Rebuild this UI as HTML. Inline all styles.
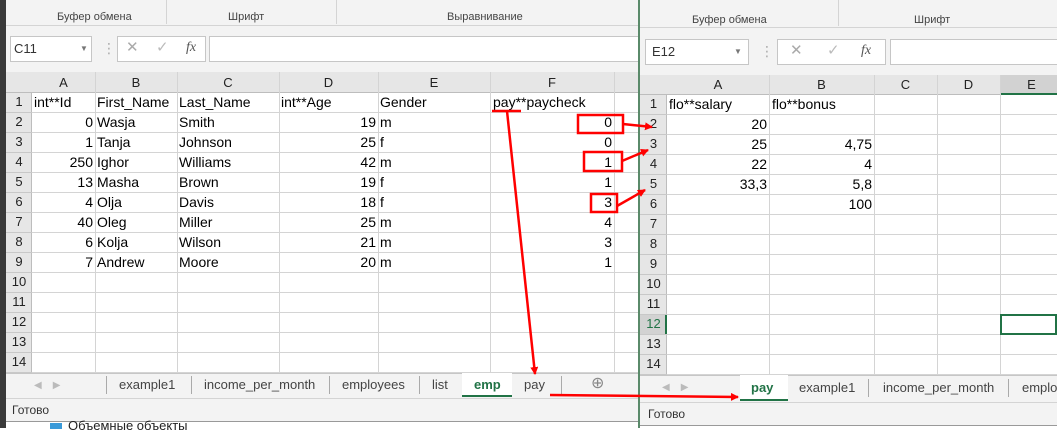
<!DOCTYPE html>
<html><head><meta charset="utf-8"><style>
*{margin:0;padding:0;box-sizing:border-box}
body{width:1057px;height:428px;overflow:hidden;background:#fff;font-family:"Liberation Sans","DejaVu Sans",sans-serif;position:relative}
.a{position:absolute}
.t{position:absolute;font-size:14px;color:#000;white-space:nowrap;line-height:20px}
.r{text-align:right}
.hd{position:absolute;font-size:13px;color:#222;text-align:center;line-height:20px}
.small{font-size:11px;color:#444}
.tab{position:absolute;font-size:13px;color:#444;line-height:24px;white-space:nowrap}
.sep{position:absolute;width:1px;background:#aaa}
</style></head><body>
<div class="a" style="left:0;top:0;width:6px;height:428px;background:#3a3a3a"></div>
<div class="a" style="left:6px;top:0;width:634px;height:422px;background:#f3f3f3"></div>
<div class="a" style="left:6px;top:25px;width:634px;height:1px;background:#d4d4d4"></div>
<div class="t small" style="left:57px;top:7px">Буфер обмена</div>
<div class="t small" style="left:228px;top:7px">Шрифт</div>
<div class="t small" style="left:447px;top:7px">Выравнивание</div>
<div class="a" style="left:166px;top:0;width:1px;height:24px;background:#d4d4d4"></div>
<div class="a" style="left:336px;top:0;width:1px;height:24px;background:#d4d4d4"></div>
<div class="a" style="left:10px;top:36px;width:82px;height:26px;background:#fff;border:1px solid #c6c6c6"></div>
<div class="t" style="left:14px;top:39px;color:#333;font-size:13px">C11</div>
<div class="t" style="left:80px;top:39px;font-size:8px;color:#777">▼</div>
<div class="t" style="left:102px;top:38px;color:#aaa">⋮</div>
<div class="a" style="left:117px;top:36px;width:89px;height:26px;background:#fff;border:1px solid #c6c6c6"></div>
<div class="t" style="left:126px;top:38px;color:#aaa;font-size:15px">✕</div>
<div class="t" style="left:156px;top:38px;color:#bbb;font-size:15px">✓</div>
<div class="t" style="left:186px;top:38px;color:#555;font-style:italic;font-family:'Liberation Serif',serif">fx</div>
<div class="a" style="left:209px;top:36px;width:431px;height:26px;background:#fff;border:1px solid #c6c6c6;border-right:none"></div>
<div class="a" style="left:6px;top:72px;width:634px;height:21px;background:#e6e6e6;border-bottom:1px solid #bdbdbd"></div>
<div class="a" style="left:6px;top:93px;width:26px;height:280px;background:#e6e6e6;border-right:1px solid #bdbdbd"></div>
<div class="a" style="left:32px;top:93px;width:608px;height:280px;background:#fff repeating-linear-gradient(to bottom,transparent 0,transparent 19px,#d4d4d4 19px,#d4d4d4 20px)"></div>
<div class="a" style="left:6px;top:93px;width:26px;height:280px;background:repeating-linear-gradient(to bottom,transparent 0,transparent 19px,#c8c8c8 19px,#c8c8c8 20px)"></div>
<div class="a" style="left:95px;top:72px;width:1px;height:301px;background:#d4d4d4"></div>
<div class="a" style="left:177px;top:72px;width:1px;height:301px;background:#d4d4d4"></div>
<div class="a" style="left:279px;top:72px;width:1px;height:301px;background:#d4d4d4"></div>
<div class="a" style="left:378px;top:72px;width:1px;height:301px;background:#d4d4d4"></div>
<div class="a" style="left:490px;top:72px;width:1px;height:301px;background:#d4d4d4"></div>
<div class="a" style="left:614px;top:72px;width:1px;height:301px;background:#d4d4d4"></div>
<div class="hd" style="left:32px;top:73px;width:63px">A</div>
<div class="hd" style="left:95px;top:73px;width:82px">B</div>
<div class="hd" style="left:177px;top:73px;width:102px">C</div>
<div class="hd" style="left:279px;top:73px;width:99px">D</div>
<div class="hd" style="left:378px;top:73px;width:112px">E</div>
<div class="hd" style="left:490px;top:73px;width:124px">F</div>
<div class="hd" style="left:6px;top:92px;width:26px">1</div>
<div class="hd" style="left:6px;top:112px;width:26px">2</div>
<div class="hd" style="left:6px;top:132px;width:26px">3</div>
<div class="hd" style="left:6px;top:152px;width:26px">4</div>
<div class="hd" style="left:6px;top:172px;width:26px">5</div>
<div class="hd" style="left:6px;top:192px;width:26px">6</div>
<div class="hd" style="left:6px;top:212px;width:26px">7</div>
<div class="hd" style="left:6px;top:232px;width:26px">8</div>
<div class="hd" style="left:6px;top:252px;width:26px">9</div>
<div class="hd" style="left:6px;top:272px;width:26px">10</div>
<div class="hd" style="left:6px;top:292px;width:26px">11</div>
<div class="hd" style="left:6px;top:312px;width:26px">12</div>
<div class="hd" style="left:6px;top:332px;width:26px">13</div>
<div class="hd" style="left:6px;top:352px;width:26px">14</div>
<div class="t" style="left:34px;top:92px">int**Id</div>
<div class="t" style="left:97px;top:92px">First_Name</div>
<div class="t" style="left:179px;top:92px">Last_Name</div>
<div class="t" style="left:281px;top:92px">int**Age</div>
<div class="t" style="left:380px;top:92px">Gender</div>
<div class="t" style="left:493px;top:92px">pay**paycheck</div>
<div class="t r" style="left:32px;width:61px;top:112px">0</div><div class="t" style="left:97px;top:112px">Wasja</div><div class="t" style="left:179px;top:112px">Smith</div><div class="t r" style="left:279px;width:97px;top:112px">19</div><div class="t" style="left:380px;top:112px">m</div><div class="t r" style="left:490px;width:122px;top:112px">0</div>
<div class="t r" style="left:32px;width:61px;top:132px">1</div><div class="t" style="left:97px;top:132px">Tanja</div><div class="t" style="left:179px;top:132px">Johnson</div><div class="t r" style="left:279px;width:97px;top:132px">25</div><div class="t" style="left:380px;top:132px">f</div><div class="t r" style="left:490px;width:122px;top:132px">0</div>
<div class="t r" style="left:32px;width:61px;top:152px">250</div><div class="t" style="left:97px;top:152px">Ighor</div><div class="t" style="left:179px;top:152px">Williams</div><div class="t r" style="left:279px;width:97px;top:152px">42</div><div class="t" style="left:380px;top:152px">m</div><div class="t r" style="left:490px;width:122px;top:152px">1</div>
<div class="t r" style="left:32px;width:61px;top:172px">13</div><div class="t" style="left:97px;top:172px">Masha</div><div class="t" style="left:179px;top:172px">Brown</div><div class="t r" style="left:279px;width:97px;top:172px">19</div><div class="t" style="left:380px;top:172px">f</div><div class="t r" style="left:490px;width:122px;top:172px">1</div>
<div class="t r" style="left:32px;width:61px;top:192px">4</div><div class="t" style="left:97px;top:192px">Olja</div><div class="t" style="left:179px;top:192px">Davis</div><div class="t r" style="left:279px;width:97px;top:192px">18</div><div class="t" style="left:380px;top:192px">f</div><div class="t r" style="left:490px;width:122px;top:192px">3</div>
<div class="t r" style="left:32px;width:61px;top:212px">40</div><div class="t" style="left:97px;top:212px">Oleg</div><div class="t" style="left:179px;top:212px">Miller</div><div class="t r" style="left:279px;width:97px;top:212px">25</div><div class="t" style="left:380px;top:212px">m</div><div class="t r" style="left:490px;width:122px;top:212px">4</div>
<div class="t r" style="left:32px;width:61px;top:232px">6</div><div class="t" style="left:97px;top:232px">Kolja</div><div class="t" style="left:179px;top:232px">Wilson</div><div class="t r" style="left:279px;width:97px;top:232px">21</div><div class="t" style="left:380px;top:232px">m</div><div class="t r" style="left:490px;width:122px;top:232px">3</div>
<div class="t r" style="left:32px;width:61px;top:252px">7</div><div class="t" style="left:97px;top:252px">Andrew</div><div class="t" style="left:179px;top:252px">Moore</div><div class="t r" style="left:279px;width:97px;top:252px">20</div><div class="t" style="left:380px;top:252px">m</div><div class="t r" style="left:490px;width:122px;top:252px">1</div>
<div class="a" style="left:6px;top:373px;width:634px;height:1px;background:#c6c6c6"></div>
<div class="t" style="left:34px;top:374px;color:#bbb;font-size:10px;line-height:24px">◀ &nbsp;&nbsp;&nbsp;▶</div>
<div class="sep" style="left:106px;top:376px;height:18px"></div>
<div class="tab" style="left:119px;top:373px">example1</div>
<div class="sep" style="left:191px;top:376px;height:18px"></div>
<div class="tab" style="left:204px;top:373px">income_per_month</div>
<div class="sep" style="left:329px;top:376px;height:18px"></div>
<div class="tab" style="left:342px;top:373px">employees</div>
<div class="sep" style="left:419px;top:376px;height:18px"></div>
<div class="tab" style="left:432px;top:373px">list</div>
<div class="a" style="left:462px;top:373px;width:50px;height:24px;background:#fff;border-bottom:2px solid #217346"></div>
<div class="tab" style="left:474px;top:373px;color:#217346;font-weight:bold">emp</div>
<div class="tab" style="left:524px;top:373px">pay</div>
<div class="sep" style="left:561px;top:376px;height:18px"></div>
<div class="tab" style="left:591px;top:372px;color:#888;font-size:16px">⊕</div>
<div class="a" style="left:6px;top:398px;width:634px;height:1px;background:#d4d4d4"></div>
<div class="t" style="left:12px;top:400px;font-size:12px;color:#333">Готово</div>
<div class="a" style="left:6px;top:421px;width:634px;height:7px;background:#fff;border-top:1px solid #999"></div>
<div class="a" style="left:50px;top:423px;width:12px;height:6px;background:#3a9ad9"></div>
<div class="t" style="left:68px;top:416px;font-size:13px;color:#222">Объемные объекты</div>

<div class="a" style="left:638px;top:0;width:419px;height:428px;background:#f3f3f3;border-left:2px solid #5a8a6a"></div>
<div class="a" style="left:640px;top:27px;width:417px;height:1px;background:#d4d4d4"></div>
<div class="t small" style="left:692px;top:10px">Буфер обмена</div>
<div class="t small" style="left:914px;top:10px">Шрифт</div>
<div class="a" style="left:838px;top:0;width:1px;height:26px;background:#d4d4d4"></div>
<div class="a" style="left:645px;top:39px;width:104px;height:26px;background:#fff;border:1px solid #c6c6c6"></div>
<div class="t" style="left:652px;top:42px;color:#333;font-size:13px">E12</div>
<div class="t" style="left:734px;top:42px;font-size:8px;color:#777">▼</div>
<div class="t" style="left:760px;top:41px;color:#aaa">⋮</div>
<div class="a" style="left:777px;top:39px;width:109px;height:26px;background:#fff;border:1px solid #c6c6c6"></div>
<div class="t" style="left:790px;top:41px;color:#aaa;font-size:15px">✕</div>
<div class="t" style="left:827px;top:41px;color:#bbb;font-size:15px">✓</div>
<div class="t" style="left:861px;top:41px;color:#555;font-style:italic;font-family:'Liberation Serif',serif">fx</div>
<div class="a" style="left:890px;top:39px;width:167px;height:26px;background:#fff;border:1px solid #c6c6c6;border-right:none"></div>
<div class="a" style="left:640px;top:75px;width:417px;height:20px;background:#e6e6e6;border-bottom:1px solid #bdbdbd"></div>
<div class="a" style="left:1000px;top:75px;width:57px;height:20px;background:#d2d2d2;border-bottom:2px solid #217346"></div>
<div class="a" style="left:640px;top:95px;width:27px;height:280px;background:#e6e6e6;border-right:1px solid #bdbdbd"></div>
<div class="a" style="left:667px;top:95px;width:390px;height:280px;background:#fff repeating-linear-gradient(to bottom,transparent 0,transparent 19px,#d4d4d4 19px,#d4d4d4 20px)"></div>
<div class="a" style="left:640px;top:95px;width:27px;height:280px;background:repeating-linear-gradient(to bottom,transparent 0,transparent 19px,#c8c8c8 19px,#c8c8c8 20px)"></div>
<div class="a" style="left:640px;top:315px;width:27px;height:19px;background:#d2d2d2;border-right:2px solid #217346"></div>
<div class="a" style="left:769px;top:75px;width:1px;height:300px;background:#d4d4d4"></div>
<div class="a" style="left:874px;top:75px;width:1px;height:300px;background:#d4d4d4"></div>
<div class="a" style="left:937px;top:75px;width:1px;height:300px;background:#d4d4d4"></div>
<div class="a" style="left:1000px;top:75px;width:1px;height:300px;background:#d4d4d4"></div>
<div class="a" style="left:1000px;top:314px;width:57px;height:21px;border:2px solid #217346"></div>
<div class="hd" style="left:667px;top:75px;width:102px">A</div>
<div class="hd" style="left:769px;top:75px;width:105px">B</div>
<div class="hd" style="left:874px;top:75px;width:63px">C</div>
<div class="hd" style="left:937px;top:75px;width:63px">D</div>
<div class="hd" style="left:1000px;top:75px;width:63px">E</div>
<div class="hd" style="left:640px;top:94px;width:27px">1</div>
<div class="hd" style="left:640px;top:114px;width:27px">2</div>
<div class="hd" style="left:640px;top:134px;width:27px">3</div>
<div class="hd" style="left:640px;top:154px;width:27px">4</div>
<div class="hd" style="left:640px;top:174px;width:27px">5</div>
<div class="hd" style="left:640px;top:194px;width:27px">6</div>
<div class="hd" style="left:640px;top:214px;width:27px">7</div>
<div class="hd" style="left:640px;top:234px;width:27px">8</div>
<div class="hd" style="left:640px;top:254px;width:27px">9</div>
<div class="hd" style="left:640px;top:274px;width:27px">10</div>
<div class="hd" style="left:640px;top:294px;width:27px">11</div>
<div class="hd" style="left:640px;top:314px;width:27px;color:#217346">12</div>
<div class="hd" style="left:640px;top:334px;width:27px">13</div>
<div class="hd" style="left:640px;top:354px;width:27px">14</div>
<div class="t" style="left:669px;top:94px">flo**salary</div>
<div class="t" style="left:772px;top:94px">flo**bonus</div>
<div class="t r" style="left:667px;width:100px;top:114px">20</div>
<div class="t r" style="left:667px;width:100px;top:134px">25</div><div class="t r" style="left:769px;width:103px;top:134px">4,75</div>
<div class="t r" style="left:667px;width:100px;top:154px">22</div><div class="t r" style="left:769px;width:103px;top:154px">4</div>
<div class="t r" style="left:667px;width:100px;top:174px">33,3</div><div class="t r" style="left:769px;width:103px;top:174px">5,8</div>
<div class="t r" style="left:769px;width:103px;top:194px">100</div>
<div class="a" style="left:640px;top:375px;width:417px;height:1px;background:#c6c6c6"></div>
<div class="t" style="left:662px;top:376px;color:#bbb;font-size:10px;line-height:24px">◀ &nbsp;&nbsp;&nbsp;▶</div>
<div class="a" style="left:740px;top:375px;width:48px;height:26px;background:#fff;border-bottom:2px solid #217346"></div>
<div class="tab" style="left:751px;top:376px;color:#217346;font-weight:bold">pay</div>
<div class="tab" style="left:799px;top:376px">example1</div>
<div class="sep" style="left:868px;top:379px;height:18px"></div>
<div class="tab" style="left:883px;top:376px">income_per_month</div>
<div class="sep" style="left:1008px;top:379px;height:18px"></div>
<div class="tab" style="left:1022px;top:376px">emplo</div>
<div class="a" style="left:640px;top:402px;width:417px;height:1px;background:#d4d4d4"></div>
<div class="t" style="left:648px;top:404px;font-size:12px;color:#333">Готово</div>
<div class="a" style="left:640px;top:425px;width:417px;height:3px;background:#fff;border-top:1px solid #999"></div>

<svg class="a" style="left:0;top:0" width="1057" height="428">
<defs><marker id="m" markerWidth="8" markerHeight="8" refX="7" refY="4" orient="auto" markerUnits="userSpaceOnUse"><path d="M0,0 L8,4 L0,8 z" fill="#f00"/></marker></defs>
<g stroke="#f00" stroke-width="2.5" fill="none">
<rect x="578" y="115" width="45" height="18"/>
<rect x="584" y="152" width="38" height="19"/>
<rect x="591" y="194" width="26" height="18"/>
<line x1="623" y1="124" x2="652" y2="127" marker-end="url(#m)"/>
<line x1="622" y1="161" x2="648" y2="150" marker-end="url(#m)"/>
<line x1="617" y1="206" x2="645" y2="190" marker-end="url(#m)"/>
<line x1="492" y1="111" x2="521" y2="111"/>
<line x1="507" y1="111" x2="535" y2="374" marker-end="url(#m)"/>
<line x1="550" y1="395" x2="738" y2="397" marker-end="url(#m)"/>
</g></svg>
</body></html>
